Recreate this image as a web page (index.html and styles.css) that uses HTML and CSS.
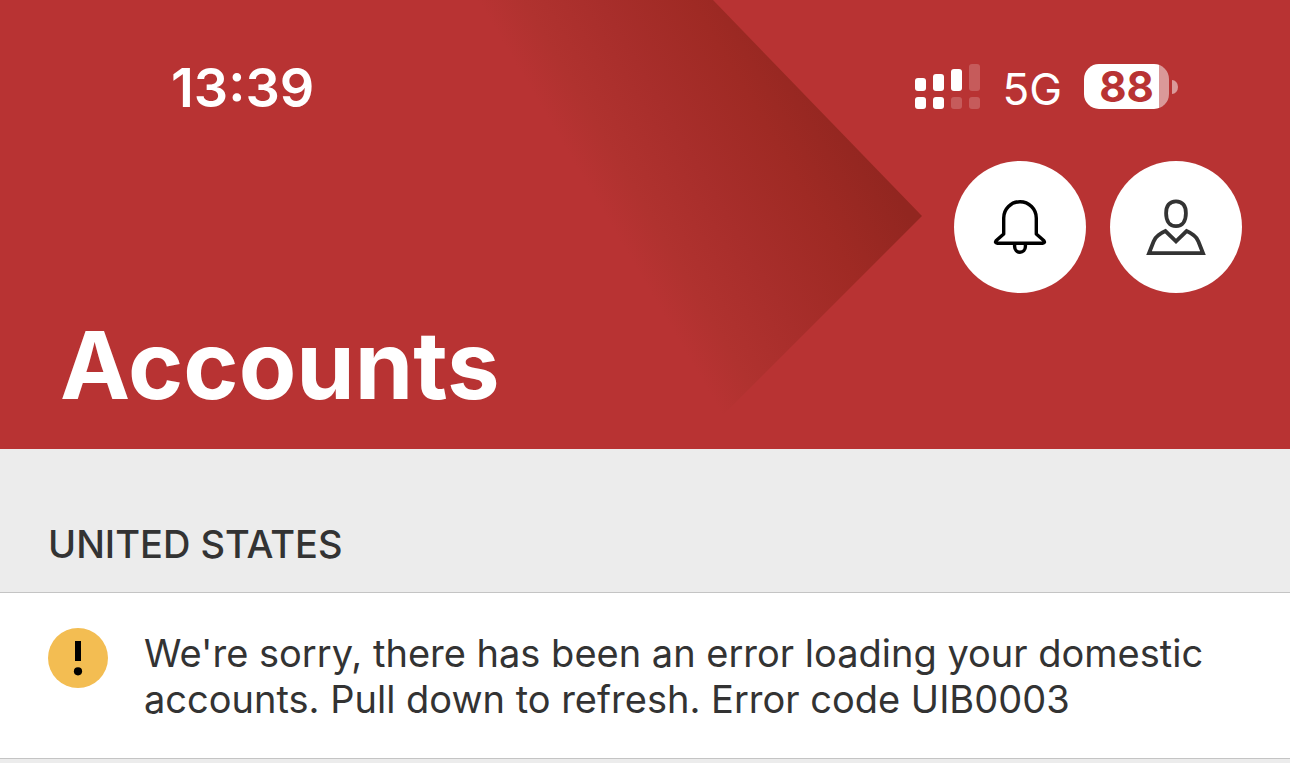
FILE: index.html
```
<!DOCTYPE html>
<html lang="en">
<head>
<meta charset="utf-8">
<meta name="viewport" content="width=device-width, initial-scale=1">
<title>Accounts</title>
<link rel="stylesheet" href="styles.css">
</head>

<body>
<header class="header">
	<svg class="header-bg" width="1290" height="449" viewBox="0 0 1290 449" aria-hidden="true">
		<defs>
			<linearGradient id="fade" gradientUnits="userSpaceOnUse" x1="478" y1="0" x2="704" y2="-133">
				<stop offset="0" stop-color="#b83333"/>
				<stop offset="0.15" stop-color="#b0322f"/>
				<stop offset="0.4" stop-color="#a82e2b"/>
				<stop offset="0.7" stop-color="#9f2a24"/>
				<stop offset="1" stop-color="#922620"/>
			</linearGradient>
		</defs>
		<path fill="url(#fade)" d="M440 0H713L922 216L700 438Z"/>
	</svg>

	<div class="status">
		<span class="time">13:39</span>
		<div class="status-right">
			<svg class="signal" width="65" height="45" viewBox="0 0 65 45" fill="#fff" role="img" aria-label="Signal strength">
				<rect x="0" y="14" width="11" height="13" rx="3"/>
				<rect x="18" y="10" width="11" height="17" rx="3"/>
				<rect x="36" y="5" width="11" height="22" rx="3"/>
				<rect class="off" x="54" y="0" width="11" height="27" rx="3"/>
				<rect x="0" y="33" width="11" height="12" rx="3"/>
				<rect x="18" y="33" width="11" height="12" rx="3"/>
				<rect class="off" x="36" y="33" width="11" height="12" rx="3"/>
				<rect class="off" x="54" y="33" width="11" height="12" rx="3"/>
			</svg>
			<span class="network">5G</span>
			<div class="battery"><span class="level">88</span><i class="nub"></i></div>
		</div>
	</div>

	<div class="actions">
		<button type="button" class="round" aria-label="Notifications">
			<svg width="132" height="132" viewBox="0 0 132 132" fill="none" stroke="#000" stroke-width="3.4" stroke-linejoin="round">
				<path d="M49.7 73V57a16.3 16.3 0 0 1 32.6 0V73L90 79.8Q91.4 82 88.6 82.3H43.4Q40.6 82 42 79.8Z"/>
				<path d="M60.6 82.3V85.6a5.4 5.6 0 0 0 10.8 0V82.3"/>
			</svg>
		</button>
		<button type="button" class="round" aria-label="Profile">
			<svg width="132" height="132" viewBox="0 0 132 132" fill="none" stroke="#333" stroke-width="3.8">
				<path d="M66 40.3C72.6 40.3 75.9 45 75.9 52.2C75.9 60 72.4 65.1 66 65.1C59.6 65.1 56.1 60 56.1 52.2C56.1 45 59.4 40.3 66 40.3Z"/>
				<path d="M39 92.2L43.6 80.5Q45 76.8 48 74.5Q51 72 55.4 70.1L66 80.4L76.6 70.1Q81 72 84 74.5Q87 76.8 88.4 80.5L93 92.2Z"/>
			</svg>
		</button>
	</div>

	<h1>Accounts</h1>
</header>

<main>
	<h2>UNITED STATES</h2>
	<div class="notice" role="alert">
		<svg class="warn" width="60" height="60" viewBox="0 0 60 60" aria-hidden="true">
			<circle cx="30" cy="30" r="30" fill="#f3bd52"/>
			<rect x="27" y="13" width="6" height="20"/>
			<circle cx="30" cy="43.3" r="4.1"/>
		</svg>
		<p>We're sorry, there has been an error loading your domestic accounts. Pull down to refresh. Error code UIB0003</p>
	</div>
</main>
</body>
</html>
```

FILE: styles.css
```
*{margin:0;padding:0;box-sizing:border-box;}
body{background:#ececec;color:#333;font-family:Inter,"Liberation Sans",sans-serif;}
svg{display:block;}

.header{position:relative;overflow:hidden;background:#b83333;color:#fff;padding:64px 48px 32px;}
.header-bg{position:absolute;top:0;left:0;}

.status{position:relative;display:flex;justify-content:space-between;align-items:center;height:45px;padding:0 64px 0 123px;}
.time{padding-top:3px;font-size:54px;font-weight:600;line-height:48px;}
.status-right{display:flex;align-items:center;gap:22px;}
.off{opacity:.2;}
.network{font-size:44px;line-height:48px;padding-top:4px;}
.battery{position:relative;width:85px;height:45px;margin-right:9px;border-radius:15px;background:linear-gradient(to right,#fff 75px,#da9999 75px);text-align:center;}
.level{color:#b83333;font-size:42px;font-weight:700;line-height:45px;}
.nub{position:absolute;left:88px;top:16px;width:6px;height:14px;border-radius:0 6px 6px 0/0 7px 7px 0;background:#da9999;}

.actions{position:relative;display:flex;justify-content:flex-end;gap:24px;margin-top:52px;}
.round{width:132px;height:132px;border:0;border-radius:50%;background:#fff;cursor:pointer;}

h1{position:relative;padding:0 12px;margin-top:20px;font-size:94px;font-weight:700;line-height:104px;}
h2{padding:72px 48px 24px;font-size:38px;font-weight:500;line-height:47px;}

.notice{display:flex;align-items:flex-start;gap:36px;min-height:167px;padding:35px 48px;background:#fff;border:solid #c4c4c4;border-width:1px 0;}
.warn{flex:none;}
.notice p{padding-top:2px;font-size:38px;line-height:46px;}
```
